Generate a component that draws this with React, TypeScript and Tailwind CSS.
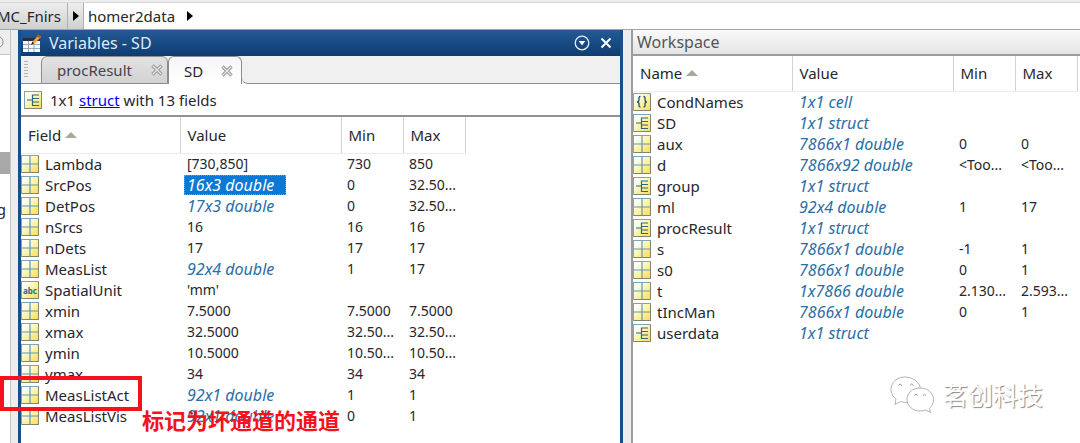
import React from "react";

type Kind = "grid" | "struct" | "cell" | "abc";
type Row = { kind: Kind; name: string; value: string; min?: string; max?: string; selected?: boolean };

const fields: Row[] = [
  { kind: "grid", name: "Lambda", value: "[730,850]", min: "730", max: "850" },
  { kind: "grid", name: "SrcPos", value: "16x3 double", min: "0", max: "32.50...", selected: true },
  { kind: "grid", name: "DetPos", value: "17x3 double", min: "0", max: "32.50..." },
  { kind: "grid", name: "nSrcs", value: "16", min: "16", max: "16" },
  { kind: "grid", name: "nDets", value: "17", min: "17", max: "17" },
  { kind: "grid", name: "MeasList", value: "92x4 double", min: "1", max: "17" },
  { kind: "abc", name: "SpatialUnit", value: "'mm'" },
  { kind: "grid", name: "xmin", value: "7.5000", min: "7.5000", max: "7.5000" },
  { kind: "grid", name: "xmax", value: "32.5000", min: "32.50...", max: "32.50..." },
  { kind: "grid", name: "ymin", value: "10.5000", min: "10.50...", max: "10.50..." },
  { kind: "grid", name: "ymax", value: "34", min: "34", max: "34" },
  { kind: "grid", name: "MeasListAct", value: "92x1 double", min: "1", max: "1" },
  { kind: "grid", name: "MeasListVis", value: "92x1 double", min: "0", max: "1" },
];

const workspace: Row[] = [
  { kind: "cell", name: "CondNames", value: "1x1 cell" },
  { kind: "struct", name: "SD", value: "1x1 struct" },
  { kind: "grid", name: "aux", value: "7866x1 double", min: "0", max: "0" },
  { kind: "grid", name: "d", value: "7866x92 double", min: "<Too...", max: "<Too..." },
  { kind: "struct", name: "group", value: "1x1 struct" },
  { kind: "grid", name: "ml", value: "92x4 double", min: "1", max: "17" },
  { kind: "struct", name: "procResult", value: "1x1 struct" },
  { kind: "grid", name: "s", value: "7866x1 double", min: "-1", max: "1" },
  { kind: "grid", name: "s0", value: "7866x1 double", min: "0", max: "1" },
  { kind: "grid", name: "t", value: "1x7866 double", min: "2.130...", max: "2.593..." },
  { kind: "grid", name: "tIncMan", value: "7866x1 double", min: "0", max: "1" },
  { kind: "struct", name: "userdata", value: "1x1 struct" },
];

function TypeIcon({ kind }: { kind: Kind }) {
  return (
    <svg className="block size-[18px] shrink-0" viewBox="0 0 18 18" aria-hidden="true">
      <defs>
        <linearGradient id="iconFill" x1="0" y1="0" x2="1" y2="1">
          <stop offset="0.2" stopColor="#fffef4" />
          <stop offset="0.6" stopColor="#fbf09a" />
          <stop offset="1" stopColor="#f5dc5c" />
        </linearGradient>
      </defs>
      <rect x="0.5" y="0.5" width="17" height="17" fill="url(#iconFill)" stroke="#7ba6ba" />
      <path d="M17.500 1v16.500H1" fill="none" stroke="#85856a" />
      {kind === "grid" && <path d="M9 1v16M1 9h16" stroke="#5f97b8" strokeWidth="1.200" />}
      {kind === "struct" && (
        <path d="M3 9h5.500M15 4H8.500v10.500H15M8.500 7.500H15M8.500 11H15" fill="none" stroke="#2d6788" strokeWidth="1.200" />
      )}
      {kind === "cell" && (
        <path
          d="M7.500 3.500C5.500 3.500 6 5 6 6.500S5.500 8.800 4 8.800C5.500 8.800 6 9.500 6 11s-.5 3 1.500 3M10.500 3.500c2 0 1.500 1.500 1.500 3s.5 2.300 2 2.300c-1.500 0-2 .7-2 2.200s.5 3-1.500 3"
          fill="none"
          stroke="#1f4e6e"
          strokeWidth="1.300"
        />
      )}
      {kind === "abc" && (
        <text x="9" y="12.500" textAnchor="middle" fontSize="8" fontWeight="700" fill="#2a6a8a" fontFamily="Noto Sans, sans-serif">
          abc
        </text>
      )}
    </svg>
  );
}

function VariableTable({ label, first, rows, head }: { label: string; first: string; rows: Row[]; head: string }) {
  const th = "border-r border-b border-r-[#d0d0d0] border-b-[#ececec] px-[7px] text-left font-normal";
  return (
    <table aria-label={label} className="w-full table-fixed border-collapse text-[14px] whitespace-nowrap">
      <colgroup>
        <col className="w-[159px]" />
        <col className="w-[161px]" />
        <col className="w-[62px]" />
        <col className="w-[62px]" />
        <col />
      </colgroup>
      <thead>
        <tr className={head}>
          <th className={th}>
            <button type="button" className="flex items-center gap-1">
              {first}
              <svg className="h-[6px] w-3" viewBox="0 0 12 6" aria-hidden="true">
                <path d="M6 0l6 6H0z" fill="#aaa89a" />
              </svg>
            </button>
          </th>
          <th className={th}>Value</th>
          <th className={th}>Min</th>
          <th className={th}>Max</th>
          <td />
        </tr>
      </thead>
      <tbody>
        {rows.map((r) => {
          const summary = /\dx\d/.test(r.value);
          return (
            <tr key={r.name} className="h-[21px] leading-5">
              <td className="p-0">
                <div className="flex items-center gap-1.5 text-[15px]">
                  <TypeIcon kind={r.kind} />
                  {r.name}
                </div>
              </td>
              <td className={summary ? "p-0 pl-1 text-[16px] text-[#2b6ea6] italic" : "p-0 pl-[7px]"}>
                <span
                  className={
                    r.selected
                      ? "block w-[102px] bg-[#0a78d7] pl-[3px] text-white outline-1 -outline-offset-1 outline-dotted outline-[#5aa5e6]"
                      : summary
                        ? "block pl-[3px]"
                        : "block"
                  }
                >
                  {r.value}
                </span>
              </td>
              <td className="p-0 pl-1.5">{r.min}</td>
              <td className="p-0 pl-1.5">{r.max}</td>
              <td />
            </tr>
          );
        })}
      </tbody>
    </table>
  );
}

function CloseMark() {
  return (
    <svg className="block size-3" viewBox="0 0 12 12" aria-hidden="true">
      <path d="M1.500 1.500l9 9M10.500 1.500l-9 9" stroke="#9b9b9b" strokeWidth="3.200" />
      <path d="M1.800 1.800l8.400 8.400M10.200 1.800l-8.400 8.400" stroke="#eee" strokeWidth="1.200" />
    </svg>
  );
}

function Arrow() {
  return (
    <svg className="h-[10px] w-[6px]" viewBox="0 0 6 10" aria-hidden="true">
      <path d="M0 0l6 5-6 5z" fill="#000" />
    </svg>
  );
}

export default function App() {
  return (
    <div className="relative flex min-h-screen flex-col overflow-hidden bg-[#ededed] font-['Noto_Sans','Noto_Sans_CJK_SC',sans-serif] text-[15px] leading-5 text-[#26262e]">
      <nav aria-label="Path" className="mt-0.5 flex h-7 items-stretch border-y border-t-[#d5d8d8] border-b-[#9aa5ad] bg-white">
        <div className="flex w-[67px] items-center justify-end bg-gradient-to-b from-[#eeeeee] to-[#cfcfcf] pr-1.5 whitespace-nowrap">
          <a href="#mc">MC_Fnirs</a>
        </div>
        <div className="flex w-[17px] items-center justify-center border-x border-[#b0b0b0] bg-gradient-to-b from-[#eeeeee] to-[#cfcfcf]">
          <Arrow />
        </div>
        <div className="flex items-center gap-3 pl-1">
          <a href="#homer">homer2data</a>
          <Arrow />
        </div>
      </nav>

      <div className="flex flex-1">
        <aside className="w-[11px] shrink-0 overflow-hidden border-r border-[#c4c4c4] bg-white">
          <div className="flex h-[25px] items-center border-b border-[#c4c4c4] bg-[#eeeeee]">
            <svg className="h-[12px] w-[4px]" viewBox="0 0 4 12" aria-hidden="true">
              <path d="M0 1c4 2 4 8 0 10" fill="none" stroke="#888" />
            </svg>
          </div>
          <div className="mt-[97px] h-[22px] bg-[#a8a8a8]" />
          <div className="mt-[25px] flex w-1.5 justify-end">g</div>
        </aside>

        <section aria-label="Variables" className="ml-[7px] flex w-[605px] shrink-0 flex-col border-x-3 border-[#174f8a] bg-white">
          <header className="flex h-[26px] items-center bg-gradient-to-b from-[#245a96] to-[#0d3c72] pr-2 text-[#dfe9f4]">
            <svg className="mr-2 ml-0.5 block h-[19px] w-[18px]" viewBox="0 0 18 19" aria-hidden="true">
              <path d="M0 4h17v14H0z" fill="#f5f7fa" />
              <path d="M0 4h17v3H0z" fill="#2a2f3a" />
              <path d="M0 10.500h17M0 14.500h17M5.500 7v11M11 7v11" stroke="#9ba8b8" />
              <path d="M8 11l2-4 6-6 2 2-6 6z" fill="#f2a63a" />
              <path d="M15 0l3 2-2 2-2.500-2z" fill="#b64d2f" />
              <path d="M8 11l1.500-3.500L11 9.500z" fill="#222" />
            </svg>
            <h2 className="flex-1 text-[16px]">Variables - SD</h2>
            <button type="button" aria-label="Panel menu" className="mr-2.5">
              <svg className="block size-4" viewBox="0 0 16 16">
                <circle cx="8" cy="8" r="6.800" fill="none" stroke="#e4edf6" strokeWidth="1.300" />
                <path d="M4.800 6h6.400L8 10.500z" fill="#fff" />
              </svg>
            </button>
            <button type="button" aria-label="Close panel">
              <svg className="block size-3" viewBox="0 0 12 12">
                <path d="M1.500 1.500l9 9M10.500 1.500l-9 9" stroke="#fff" strokeWidth="2" />
              </svg>
            </button>
          </header>

          <div role="tablist" className="flex h-7 bg-[#f0f0f0]">
            <div className="flex w-5 items-center border-b border-[#8c8c8c] pl-[3px]">
              <div className="h-[18px] w-1 bg-[repeating-linear-gradient(#b4b4b4_0_1px,#f0f0f0_1px_3px)]" />
            </div>
            <div className="flex w-[127px] items-center justify-between rounded-t-md border border-[#8c8c8c] bg-gradient-to-b from-[#e2e2e2] to-[#d2d2d2] pr-1 pl-[15px] text-[#44444a]">
              <button type="button" role="tab" aria-selected="false">procResult</button>
              <button type="button" aria-label="Close procResult"><CloseMark /></button>
            </div>
            <div className="flex w-[74px] items-center justify-between rounded-t-md border-x border-t border-[#8c8c8c] bg-gradient-to-b from-[#f6f6fa] to-white pr-2 pl-[15px]">
              <button type="button" role="tab" aria-selected="true">SD</button>
              <button type="button" aria-label="Close SD"><CloseMark /></button>
            </div>
            <div className="flex-1 rounded-bl-md border-b border-[#8c8c8c]" />
          </div>

          <div className="flex h-[33px] items-center border-b-2 border-[#938f94] pl-[3px]">
            <TypeIcon kind="struct" />
            <p className="ml-2">
              1x1 <a href="#struct" className="text-[#0000f0] underline">struct</a> with 13 fields
            </p>
          </div>
          <VariableTable label="Fields" first="Field" rows={fields} head="h-9 text-[15px]" />
        </section>

        <section aria-label="Workspace" className="ml-2 flex min-w-0 flex-1 flex-col border-l-2 border-[#9a9ca0] bg-white">
          <h2 className="flex h-[26px] items-center border-b-2 border-[#9a9ca0] bg-gradient-to-b from-[#fafafa] to-[#e4e4e4] pl-1 text-[16px] text-[#55555a]">Workspace</h2>
          <VariableTable label="Workspace variables" first="Name" rows={workspace} head="h-[35px] text-[15px]" />
        </section>
      </div>

      <div className="pointer-events-none absolute top-[376px] left-0 h-[35px] w-[142px] border-4 border-[#f5121d]" />
      <p className="absolute top-[408px] left-[142px] text-[22px] leading-6 font-bold whitespace-nowrap text-[#f5121d]">标记为坏通道的通道</p>

      <div className="absolute right-[37px] bottom-[29px] flex items-center gap-[9px]">
        <svg className="h-[38px] w-11 overflow-visible" viewBox="0 0 44 38" aria-hidden="true">
          <g fill="#fff" stroke="#aaa" strokeWidth="0.900">
            <path d="M15 1C7 1 1 6.500 1 13.500c0 4 2 7.300 5 9.500l-1 5.500 5.500-3c5 1.500 10 .8 14-1.500 4-2.500 6-6 6-10.500C30.500 6.500 23 1 15 1z" />
            <path d="M30 12c-7.500 0-13 5-13 11.500S23 35 30 35c2 0 4-.3 5.500-1l5 2.500-1-4.200c2.500-2.300 4-5 4-8.800C43.500 17 37.500 12 30 12z" />
          </g>
          <path d="M8.500 9.500q1.500-3 3.500 0M20 9.500q1.500-3 3.500 0M24.500 19.500q1.500-2.500 3 0M33 19.500q1.500-2.500 3 0" fill="none" stroke="#999" />
        </svg>
        <span className="text-[25px] leading-8 text-white [text-shadow:1px_1px_1px_#888]">茗创科技</span>
      </div>
    </div>
  );
}
